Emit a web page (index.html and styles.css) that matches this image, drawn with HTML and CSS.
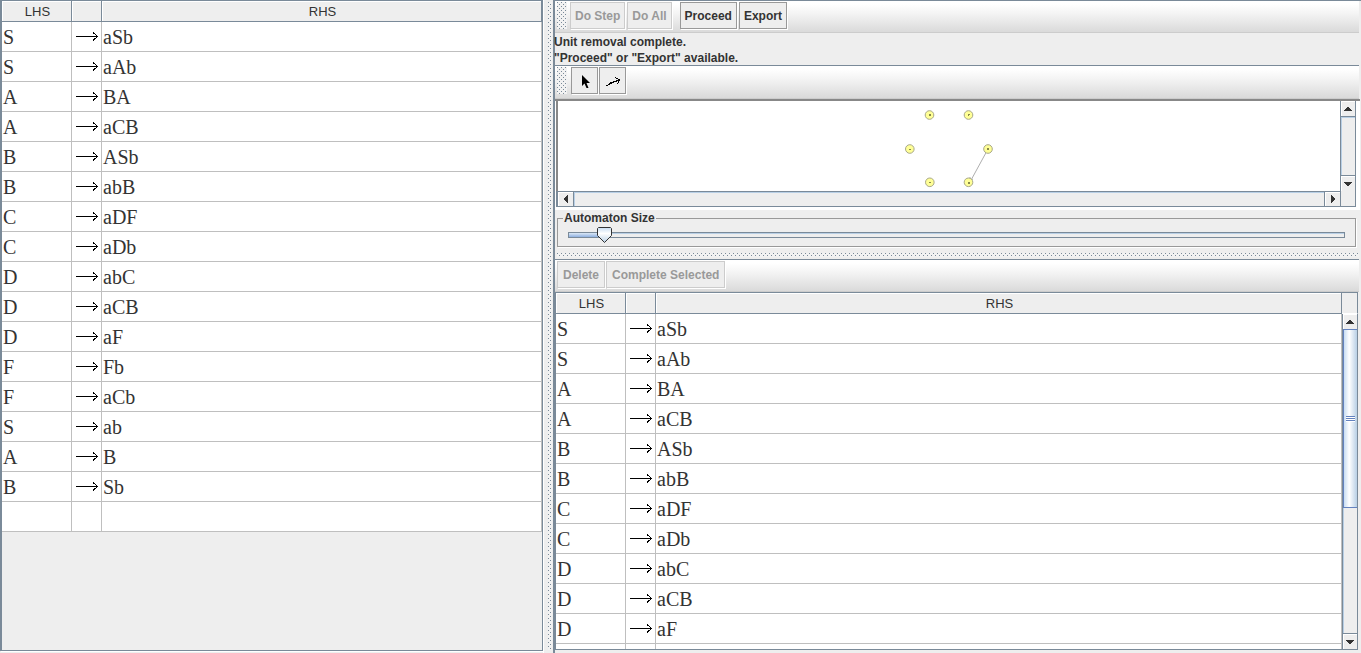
FILE: index.html
```html
<!DOCTYPE html>
<html lang="en">
<head>
<meta charset="utf-8">
<title>Grammar Transformation</title>
<link rel="stylesheet" href="styles.css">
</head>
<body>
<svg class="defs" aria-hidden="true">
  <symbol id="arrow" viewBox="0 0 22 10"><path d="M0 5.5H22M17 1.500L21.500 5.500L17 9.500" fill="none" stroke="#000" shape-rendering="crispEdges"/></symbol>
  <symbol id="up" viewBox="0 0 8 4"><path d="M3 0H5V1H6V2H7V3H8V4H0V3H1V2H2V1H3Z" fill="#333"/></symbol>
  <symbol id="down" viewBox="0 0 8 4"><path d="M0 0H8V1H7V2H6V3H5V4H3V3H2V2H1V1H0Z" fill="#333"/></symbol>
  <symbol id="left" viewBox="0 0 4 8"><path d="M4 0V8H3V7H2V6H1V5H0V3H1V2H2V1H3V0Z" fill="#333"/></symbol>
  <symbol id="right" viewBox="0 0 4 8"><path d="M0 0V8H1V7H2V6H3V5H4V3H3V2H2V1H1V0Z" fill="#333"/></symbol>
</svg>
<main class="split">
  <section class="source">
    <table class="grammar">
      <colgroup><col class="lhs"><col class="mid"><col></colgroup>
      <thead><tr><th>LHS</th><th></th><th>RHS</th></tr></thead>
      <tbody>
        <tr><td>S</td><td><svg class="arrow"><use href="#arrow"/></svg></td><td>aSb</td></tr>
        <tr><td>S</td><td><svg class="arrow"><use href="#arrow"/></svg></td><td>aAb</td></tr>
        <tr><td>A</td><td><svg class="arrow"><use href="#arrow"/></svg></td><td>BA</td></tr>
        <tr><td>A</td><td><svg class="arrow"><use href="#arrow"/></svg></td><td>aCB</td></tr>
        <tr><td>B</td><td><svg class="arrow"><use href="#arrow"/></svg></td><td>ASb</td></tr>
        <tr><td>B</td><td><svg class="arrow"><use href="#arrow"/></svg></td><td>abB</td></tr>
        <tr><td>C</td><td><svg class="arrow"><use href="#arrow"/></svg></td><td>aDF</td></tr>
        <tr><td>C</td><td><svg class="arrow"><use href="#arrow"/></svg></td><td>aDb</td></tr>
        <tr><td>D</td><td><svg class="arrow"><use href="#arrow"/></svg></td><td>abC</td></tr>
        <tr><td>D</td><td><svg class="arrow"><use href="#arrow"/></svg></td><td>aCB</td></tr>
        <tr><td>D</td><td><svg class="arrow"><use href="#arrow"/></svg></td><td>aF</td></tr>
        <tr><td>F</td><td><svg class="arrow"><use href="#arrow"/></svg></td><td>Fb</td></tr>
        <tr><td>F</td><td><svg class="arrow"><use href="#arrow"/></svg></td><td>aCb</td></tr>
        <tr><td>S</td><td><svg class="arrow"><use href="#arrow"/></svg></td><td>ab</td></tr>
        <tr><td>A</td><td><svg class="arrow"><use href="#arrow"/></svg></td><td>B</td></tr>
        <tr><td>B</td><td><svg class="arrow"><use href="#arrow"/></svg></td><td>Sb</td></tr>
        <tr><td></td><td></td><td></td></tr>
      </tbody>
    </table>
  </section>
  <div class="divider"><div class="dots"></div></div>
  <section class="work">
    <div class="toolbar">
      <div class="dots grip"></div>
      <button class="btn" disabled>Do Step</button>
      <button class="btn" disabled>Do All</button>
      <span class="spacer"></span>
      <button class="btn">Proceed</button>
      <button class="btn">Export</button>
    </div>
    <div class="status"><p>Unit removal complete.</p><p>"Proceed" or "Export" available.</p></div>
    <div class="toolbar tools">
      <div class="dots grip"></div>
      <button class="btn icon" aria-label="Select"><svg width="16" height="16" viewBox="0 0 16 16"><path d="M5 2V13L7.500 10.500L9.500 15H11.500L9.500 10H13Z" fill="#000"/></svg></button>
      <button class="btn icon" aria-label="Transition"><svg width="16" height="16" viewBox="0 0 16 16"><path d="M1 13L8.500 9.500M4 10.500L14.500 7M10 4.500L14.500 7L12.500 11" fill="none" stroke="#000" shape-rendering="crispEdges"/></svg></button>
    </div>
    <div class="canvas">
      <div class="view">
        <svg width="100" height="90" viewBox="0 0 100 90">
          <path d="M89 48L71 81M71 76V80L74 78" fill="none" stroke="#999" stroke-width="0.800"/>
          <g fill="#ffff96" stroke="#a8a888">
            <circle cx="30.500" cy="14" r="4.300"/><circle cx="69.500" cy="14" r="4.300"/>
            <circle cx="10.800" cy="48" r="4.300"/><circle cx="89" cy="48" r="4.300"/>
            <circle cx="30.800" cy="81.300" r="4.300"/><circle cx="69.500" cy="81.300" r="4.300"/>
          </g>
          <path d="M30 13h2v2h-2zM69 13h2v1h-1v1h-1zM10 48h2v1h-2zM88 47h2v2h-2zM30 81h2v1h-2zM69 81h2v2h-2z" fill="#88884c"/>
        </svg>
      </div>
      <div class="vbar">
        <button class="arrowbtn" aria-label="Scroll up"><svg width="8" height="4"><use href="#up"/></svg></button>
        <div class="trough"></div>
        <button class="arrowbtn" aria-label="Scroll down"><svg width="8" height="4"><use href="#down"/></svg></button>
      </div>
      <div class="hbar">
        <button class="arrowbtn" aria-label="Scroll left"><svg width="4" height="8"><use href="#left"/></svg></button>
        <div class="trough"></div>
        <button class="arrowbtn" aria-label="Scroll right"><svg width="4" height="8"><use href="#right"/></svg></button>
      </div>
      <div class="corner"></div>
    </div>
    <div class="sizer">
      <fieldset class="group">
        <legend><label for="size">Automaton Size</label></legend>
        <input class="slider" id="size" type="range" min="0" max="1000" value="37">
      </fieldset>
    </div>
    <div class="hdivider"><div class="dots"></div></div>
    <div class="toolbar edit">
      <button class="btn" disabled>Delete</button>
      <button class="btn" disabled>Complete Selected</button>
    </div>
    <div class="result">
      <div class="rows">
        <table class="grammar">
          <colgroup><col class="lhs"><col class="mid"><col></colgroup>
          <thead><tr><th>LHS</th><th></th><th>RHS</th></tr></thead>
          <tbody>
            <tr><td>S</td><td><svg class="arrow"><use href="#arrow"/></svg></td><td>aSb</td></tr>
            <tr><td>S</td><td><svg class="arrow"><use href="#arrow"/></svg></td><td>aAb</td></tr>
            <tr><td>A</td><td><svg class="arrow"><use href="#arrow"/></svg></td><td>BA</td></tr>
            <tr><td>A</td><td><svg class="arrow"><use href="#arrow"/></svg></td><td>aCB</td></tr>
            <tr><td>B</td><td><svg class="arrow"><use href="#arrow"/></svg></td><td>ASb</td></tr>
            <tr><td>B</td><td><svg class="arrow"><use href="#arrow"/></svg></td><td>abB</td></tr>
            <tr><td>C</td><td><svg class="arrow"><use href="#arrow"/></svg></td><td>aDF</td></tr>
            <tr><td>C</td><td><svg class="arrow"><use href="#arrow"/></svg></td><td>aDb</td></tr>
            <tr><td>D</td><td><svg class="arrow"><use href="#arrow"/></svg></td><td>abC</td></tr>
            <tr><td>D</td><td><svg class="arrow"><use href="#arrow"/></svg></td><td>aCB</td></tr>
            <tr><td>D</td><td><svg class="arrow"><use href="#arrow"/></svg></td><td>aF</td></tr>
            <tr><td></td><td></td><td></td></tr>
          </tbody>
        </table>
      </div>
      <div class="side">
        <div class="cap"></div>
        <div class="vbar">
          <button class="arrowbtn" aria-label="Scroll up"><svg width="8" height="4"><use href="#up"/></svg></button>
          <div class="trough"><div class="thumb"><span class="ridges"></span></div></div>
          <button class="arrowbtn" aria-label="Scroll down"><svg width="8" height="4"><use href="#down"/></svg></button>
        </div>
      </div>
    </div>
  </section>
</main>
</body>
</html>
```
FILE: styles.css
```css
* { box-sizing: border-box; }
:root {
  --edge: #7a8a99;
  --panel: #eee;
  --ink: #333;
  --grid: #bfbfbf;
}
body {
  margin: 0;
  background: var(--panel);
  color: var(--ink);
  font: bold 12px/16px "Liberation Sans", Arial, sans-serif;
}
.defs { position: absolute; width: 0; height: 0; }
svg { display: block; }
p { margin: 0; }

.split {
  display: grid;
  grid-template-columns: 543fr 10px 808fr;
  height: 100vh;
  overflow: hidden;
}
.source {
  min-width: 0;
  margin-bottom: 2px;
  overflow: hidden;
  border: 1px solid var(--edge);
  border-left-width: 2px;
  box-shadow: 1px 1px #fff;
}
.divider { padding: 2px 2px 3px 4px; border-left: 1px solid #fff; }
.dots {
  background-color: #f2f2f2;
  background-image: url("data:image/svg+xml,%3Csvg xmlns='http://www.w3.org/2000/svg' width='4' height='4'%3E%3Cpath d='M0 0h1v1H0zM2 2h1v1H2z' fill='%237a8a99'/%3E%3C/svg%3E");
}
.divider .dots { width: 4px; height: 100%; }

/* Grammar tables */
.grammar { width: 100%; border-collapse: separate; border-spacing: 0; table-layout: fixed; }
.lhs { width: 70px; }
.mid { width: 30px; }
.grammar th {
  height: 21px;
  padding: 2px 0 0 2px;
  background: var(--panel);
  border-right: 1px solid var(--edge);
  border-bottom: 1px solid var(--edge);
  box-shadow: inset 1px 1px #fff;
  font-size: 13px;
  font-weight: normal;
  line-height: 18px;
}
.grammar td {
  height: 30px;
  padding: 0 1px;
  background: #fff;
  border-right: 1px solid var(--grid);
  border-bottom: 1px solid var(--grid);
  font: 20px/24px "Liberation Serif", "Times New Roman", serif;
}
.grammar td:nth-child(2) { padding: 0 0 2px 4px; }
.arrow { width: 22px; height: 10px; }

/* Right side */
.work {
  display: flex;
  flex-direction: column;
  min-width: 0;
  min-height: 0;
  padding-right: 2px;
  padding-bottom: 3px;
  border-top: 1px solid var(--edge);
  border-left: 2px solid var(--edge);
}
.toolbar {
  display: flex;
  flex: none;
  align-items: center;
  gap: 2px;
  height: 32px;
  padding: 0 2px 2px;
  background: linear-gradient(#fff 10%, #f4f4f4 40%, #dadada);
  border-bottom: 1px solid #ccc;
}
.grip { width: 10px; height: 27px; margin-right: 1px; }
.btn {
  height: 27px;
  padding: 0 4px;
  background: var(--panel);
  border: 1px solid #999;
  box-shadow: 1px 1px #fff;
  color: var(--ink);
  font: inherit;
  white-space: nowrap;
}
.btn:disabled { color: #999; border-color: #ccc; }
.spacer { width: 4px; }
.status { flex: none; height: 32px; padding-top: 1px; margin-left: -1px; }
.tools { gap: 1px; height: 34px; padding-bottom: 3px; border-top: 1px solid var(--edge); }
.tools .grip { margin-right: 3px; }
.btn.icon { display: grid; place-items: center; width: 27px; padding: 0; }

.canvas {
  display: grid;
  flex: none;
  grid-template: 90px 16px / 1fr 16px;
  background: #fff;
  margin-right: -1px;
  padding: 0 4px 3px 1px;
  border-top: 2px solid #888;
}
.view {
  display: grid;
  justify-items: center;
  min-width: 0;
  overflow: hidden;
  background: #fff;
  border-left: 2px solid #888;
}
.vbar, .hbar { display: flex; min-width: 0; min-height: 0; background: var(--panel); }
.vbar { flex-direction: column; border-left: 1px solid var(--edge); border-right: 1px solid var(--edge); }
.hbar { border: 1px solid var(--edge); border-width: 1px 0 1px 2px; }
.corner { background: var(--panel); border: 1px solid var(--edge); border-top: 0; }
.arrowbtn {
  display: grid;
  flex: none;
  place-items: center;
  width: 100%;
  height: 15px;
  padding: 0;
  background: var(--panel);
  border: 0;
  box-shadow: inset 1px 1px #fff;
}
.hbar .arrowbtn { width: 15px; height: 100%; }
.trough { flex: 1; min-height: 0; border: 1px solid var(--edge); }
.vbar .trough { border-width: 1px 0; box-shadow: inset 1px 1px #b8cfe5; }
.hbar .trough { border-width: 0 1px; box-shadow: inset 1px 1px #b8cfe5; }

.sizer { flex: none; padding: 0 3px 3px 2px; }
.group {
  min-width: 0;
  margin: 0;
  padding: 0 10px 2px;
  border: 1px solid #999;
  box-shadow: 1px 1px #fff;
}
.group legend { margin-left: -5px; padding: 0 1px; }
.slider {
  display: block;
  width: 100%;
  height: 18px;
  margin: 0;
  background: transparent;
  appearance: none;
}
.slider::-webkit-slider-runnable-track {
  height: 6px;
  border: 1px solid var(--edge);
  background: linear-gradient(#fff, #a3b8cc) 0 0 / 4% 100% no-repeat, linear-gradient(#a3b8cc 1px, #eee 1px);
  background: linear-gradient(#dbe8f6, #8fb0e0) 0 0 / 4% 100% no-repeat, linear-gradient(#b8cfe5 1px, #eee 1px);
}
.slider::-webkit-slider-thumb {
  width: 15px;
  height: 16px;
  margin-top: -6px;
  appearance: none;
  background: url("data:image/svg+xml,%3Csvg xmlns='http://www.w3.org/2000/svg' width='15' height='16'%3E%3Cdefs%3E%3ClinearGradient id='g' x2='0' y2='1'%3E%3Cstop stop-color='%23c8ddf2'/%3E%3Cstop offset='.4' stop-color='%23fff'/%3E%3Cstop offset='1' stop-color='%23b8cfe5'/%3E%3C/linearGradient%3E%3C/defs%3E%3Cpath d='M1.500 .5H13.500L14.500 1.500V8.500L7.500 15.500L.5 8.500V1.500Z' fill='url(%23g)' stroke='%23333'/%3E%3C/svg%3E");
}

.hdivider { flex: none; height: 9px; padding: 3px 0 2px 2px; }
.hdivider .dots { height: 4px; }
.edit { gap: 1px; height: 33px; border-top: 1px solid var(--edge); }
.edit .btn { padding: 0 5px; }

.result {
  display: grid;
  flex: 1;
  grid-template-columns: minmax(0, 1fr) 16px;
  min-height: 0;
  margin-right: 1px;
  border: 1px solid var(--edge);
  border-right: 0;
}
.rows { min-height: 0; overflow: hidden; }
.side { display: flex; flex-direction: column; min-height: 0; }
.side .vbar { flex: 1; }
.cap {
  height: 21px;
  border-right: 1px solid var(--edge);
  border-bottom: 1px solid #fff;
}
.side .trough { border-top: 0; }
.thumb {
  display: grid;
  place-items: center;
  height: 59%;
  border: 1px solid #6382bf;
  border-right: 0;
  background: linear-gradient(90deg, #c8ddf2, #fff 40%, #b8cfe5);
}
.ridges {
  width: 9px;
  height: 6px;
  background: repeating-linear-gradient(#6382bf 0 1px, #fff 1px 2px);
}
```
